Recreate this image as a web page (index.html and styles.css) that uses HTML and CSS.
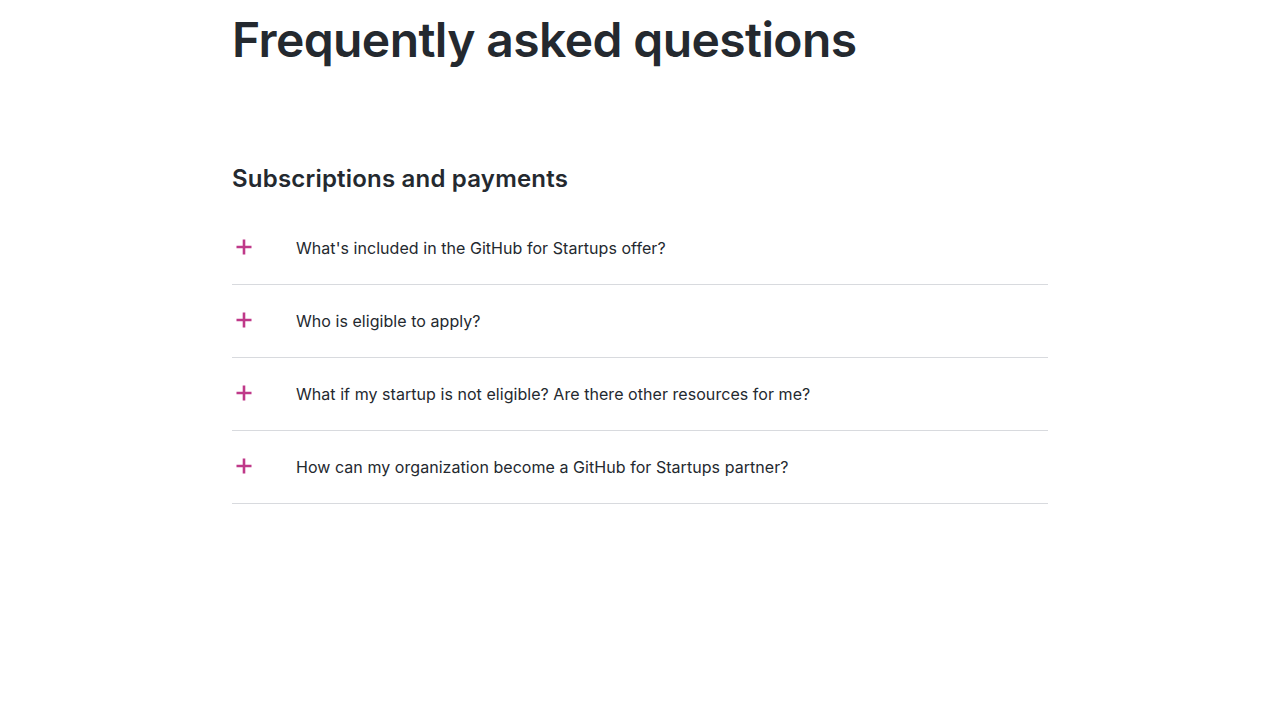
FILE: index.html
```html
<!DOCTYPE html>
<html lang="en">
<head>
<meta charset="utf-8">
<title>FAQ</title>
<link rel="stylesheet" href="styles.css">
</head>
<body>
<main class="faq">
  <h1 class="faq-title">Frequently asked questions</h1>
  <section class="faq-group">
    <h2 class="faq-group-title">Subscriptions and payments</h2>
    <ul class="faq-list">
      <li class="faq-item">
        <span class="faq-icon"><svg viewBox="0 0 16 16" width="16" height="16"><path d="M8 0.5v15M0.5 8h15" stroke="currentColor" stroke-width="2.6" fill="none"/></svg></span>
        <span class="faq-q">What's included in the GitHub for Startups offer?</span>
      </li>
      <li class="faq-item">
        <span class="faq-icon"><svg viewBox="0 0 16 16" width="16" height="16"><path d="M8 0.5v15M0.5 8h15" stroke="currentColor" stroke-width="2.6" fill="none"/></svg></span>
        <span class="faq-q">Who is eligible to apply?</span>
      </li>
      <li class="faq-item">
        <span class="faq-icon"><svg viewBox="0 0 16 16" width="16" height="16"><path d="M8 0.5v15M0.5 8h15" stroke="currentColor" stroke-width="2.6" fill="none"/></svg></span>
        <span class="faq-q">What if my startup is not eligible? Are there other resources for me?</span>
      </li>
      <li class="faq-item">
        <span class="faq-icon"><svg viewBox="0 0 16 16" width="16" height="16"><path d="M8 0.5v15M0.5 8h15" stroke="currentColor" stroke-width="2.6" fill="none"/></svg></span>
        <span class="faq-q">How can my organization become a GitHub for Startups partner?</span>
      </li>
    </ul>
  </section>
</main>
</body>
</html>
```

FILE: styles.css
```css
html, body {
  margin: 0;
  padding: 0;
  background: #ffffff;
}
body {
  font-family: Inter, "Liberation Sans", Arial, sans-serif;
  color: #1f2328;
}
.faq {
  width: 816px;
  margin: 0 auto;
  padding-top: 12px;
}
.faq-title {
  margin: 0;
  font-size: 48px;
  line-height: 56px;
  font-weight: 600;
  letter-spacing: -0.6px;
  color: #24292f;
}
.faq-group {
  margin-top: 95px;
}
.faq-group-title {
  margin: 0;
  font-size: 24px;
  line-height: 32px;
  font-weight: 600;
  letter-spacing: 0.2px;
  color: #24292f;
}
.faq-list {
  list-style: none;
  margin: 17px 0 0;
  padding: 0;
}
.faq-item {
  display: flex;
  align-items: center;
  height: 72px;
  border-bottom: 1px solid #d8dade;
}
.faq-icon {
  width: 64px;
  flex: none;
  display: flex;
  align-items: center;
  padding-left: 236px;
  padding-left: 4px;
  padding-bottom: 2px;
  box-sizing: border-box;
  color: #bf3989;
}
.faq-icon svg {
  display: block;
}
.faq-q {
  font-size: 16px;
  line-height: 24px;
  color: #24292f;
  letter-spacing: 0.05px;
}
```
